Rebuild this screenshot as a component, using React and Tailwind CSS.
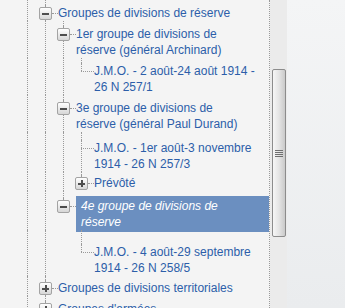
import React from 'react';

// flattened tree rows: cols = guide line per ancestor column, last = last child of its parent
const rows = [
  { text: 'Groupes de divisions de réserve', cols: [true], last: false, toggle: 'minus', pt: 'pt-[5px]' },
  { text: '1er groupe de divisions de réserve (général Archinard)', cols: [true, true], last: false, toggle: 'minus', pt: 'pt-[5px]' },
  { text: 'J.M.O. - 2 août-24 août 1914 - 26 N 257/1', cols: [true, true, true], last: true, toggle: null, pt: 'pt-[5px]' },
  { text: '3e groupe de divisions de réserve (général Paul Durand)', cols: [true, true], last: false, toggle: 'minus', pt: 'pt-[5px]' },
  { text: 'J.M.O. - 1er août-3 novembre 1914 - 26 N 257/3', cols: [true, true, true], last: false, toggle: null, pt: 'pt-[8px]' },
  { text: 'Prévôté', cols: [true, true, true], last: true, toggle: 'plus', pt: 'pt-[3px]' },
  { text: '4e groupe de divisions de réserve', cols: [true, true], last: true, toggle: 'minus', pt: 'pt-[7px]', selected: true },
  { text: 'J.M.O. - 4 août-29 septembre 1914 - 26 N 258/5', cols: [true, true, false], last: true, toggle: null, pt: 'pt-[14px]' },
  { text: 'Groupes de divisions territoriales', cols: [true], last: false, toggle: 'plus', pt: 'pt-[4px]' },
  { text: "Groupes d'armées", cols: [true], last: false, toggle: 'plus', pt: 'pt-[5px]' },
];

const line = 'ml-[9px] border-l border-dotted border-[#9a9a9a]';

function ToggleBox({ kind }) {
  return (
    <div className="ml-[3px] flex h-[13px] w-[13px] shrink-0 items-center justify-center rounded-[2px] border border-[#a3a3a3] bg-gradient-to-b from-white to-[#d6d6d6]">
      <div className="relative h-[2px] w-[7px] bg-[#4d4d4d]">
        {kind === 'plus' && <div className="absolute left-[2.5px] top-[-2.5px] h-[7px] w-[2px] bg-[#4d4d4d]" />}
      </div>
    </div>
  );
}

function OwnCell({ row }) {
  return (
    <div className="flex w-[22px] shrink-0 flex-col">
      <div className={`${row.pt} ${line}`} />
      {row.toggle ? (
        <>
          <div className={`h-[2px] ${line}`} />
          <div className="flex h-[13px] items-center">
            <ToggleBox kind={row.toggle} />
            <div className="h-0 flex-1 border-t border-dotted border-[#9a9a9a]" />
          </div>
        </>
      ) : (
        <>
          <div className={`h-[8px] ${line}`} />
          <div className="ml-[9px] h-0 border-t border-dotted border-[#9a9a9a]" />
        </>
      )}
      {!row.last && <div className={`flex-1 ${line}`} />}
    </div>
  );
}

function TreeRow({ row }) {
  return (
    <div className="flex items-stretch">
      {row.cols.map((on, i) => (
        <div key={i} className="flex w-[18px] shrink-0">
          {on && <div className={`h-full ${line}`} />}
        </div>
      ))}
      <OwnCell row={row} />
      <div className={`min-w-0 flex-1 ${row.pt}`}>
        {row.selected ? (
          <div className="-my-[2px] bg-[#6b8fc0] py-[2px] pl-[5px] pr-[13.5px] italic text-white">{row.text}</div>
        ) : (
          <div className="pr-[13.5px] text-[#2c5ea9]">{row.text}</div>
        )}
      </div>
    </div>
  );
}

export default function App() {
  return (
    <div className="flex h-[308px] w-[345px] overflow-hidden bg-[#f4f4f4] font-['Liberation_Sans',Arial,sans-serif] text-[12px] leading-[16px]">
      <div className="w-[270px] shrink-0 overflow-hidden border-r border-dotted border-[#9a9a9a] pl-[18px]">
        {rows.map((row, i) => (
          <TreeRow key={i} row={row} />
        ))}
      </div>
      <div className="flex w-[17px] shrink-0 flex-col bg-[#ebebeb] px-[2px] pt-[69px]">
        <div className="flex h-[168px] w-[14px] items-center justify-center rounded-[2px] border border-[#8c8c8c] bg-gradient-to-r from-[#f6f6f6] via-[#e4e4e4] to-[#cacaca]">
          <div className="flex flex-col gap-[1px]">
            <div className="h-[1px] w-[8px] bg-[#6f6f6f]" />
            <div className="h-[1px] w-[8px] bg-[#6f6f6f]" />
            <div className="h-[1px] w-[8px] bg-[#6f6f6f]" />
            <div className="h-[1px] w-[8px] bg-[#6f6f6f]" />
          </div>
        </div>
      </div>
      <div className="flex-1 bg-gradient-to-b from-[#f4f5f6] to-[#eaecee]" />
    </div>
  );
}
